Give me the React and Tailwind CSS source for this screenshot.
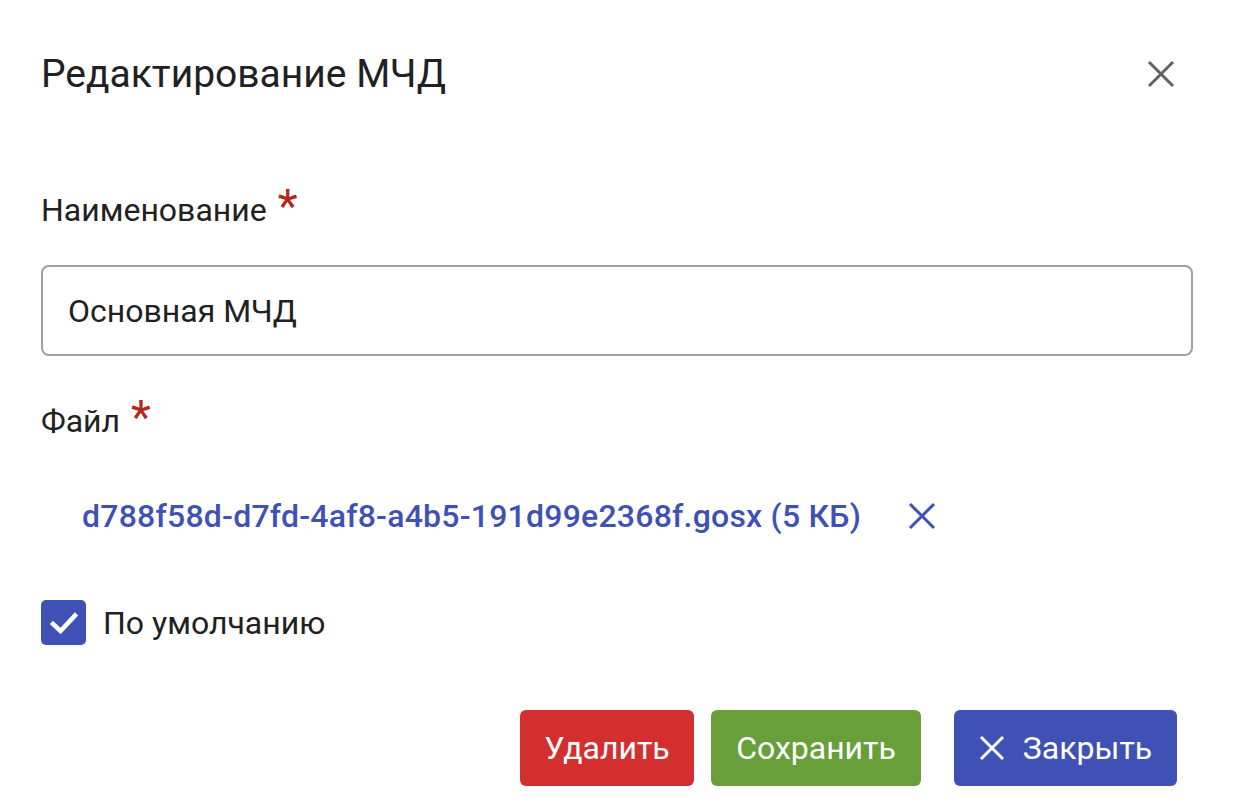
import React from "react";

export default function App() {
  return (
    <div className="w-[1234px] h-[812px] bg-white text-[#212121]" style={{ fontFamily: "Roboto, 'Noto Sans', sans-serif" }}>
      <div className="flex items-center justify-between pl-[41px] pr-[58px] pt-[46px]">
        <h1 className="text-[39px] leading-[56px] font-normal">Редактирование МЧД</h1>
        <button className="w-[30px] h-[30px] flex items-center justify-center text-[#616161]">
          <svg width="28" height="28" viewBox="0 0 28 28" fill="none" stroke="currentColor" strokeWidth="3">
            <path d="M2 2L26 26M26 2L2 26" />
          </svg>
        </button>
      </div>

      <div className="px-[41px] pt-[88px]">
        <label className="flex items-start text-[32px] leading-[40px]">
          Наименование
          <span className="text-[#b3261e] text-[46px] leading-[40px] ml-[11px] mt-[-4px]">*</span>
        </label>
        <div className="mt-[35px] h-[91px] w-[1152px] border-2 border-[#a0a0a0] rounded-[8px] flex items-center px-[25px] text-[32px]">
          Основная МЧД
        </div>

        <label className="flex items-start text-[32px] leading-[40px] mt-[45px]">
          Файл
          <span className="text-[#b3261e] text-[46px] leading-[40px] ml-[11px] mt-[-4px]">*</span>
        </label>

        <div className="flex items-center mt-[55px] pl-[41px] text-[#3f51b5]">
          <span className="text-[32px] leading-[40px] font-medium tracking-[0.22px]">d788f58d-d7fd-4af8-a4b5-191d99e2368f.gosx (5 КБ)</span>
          <svg className="ml-[47px]" width="28" height="28" viewBox="0 0 28 28" fill="none" stroke="currentColor" strokeWidth="3">
            <path d="M2 2L26 26M26 2L2 26" />
          </svg>
        </div>

        <div className="flex items-center mt-[64px]">
          <div className="w-[45px] h-[45px] rounded-[5px] bg-[#3f51b5] flex items-center justify-center">
            <svg width="32" height="32" viewBox="0 0 32 32" fill="none" stroke="white" strokeWidth="4.5" strokeLinecap="square">
              <path d="M5 17L12.5 24L27 8.5" />
            </svg>
          </div>
          <span className="ml-[17px] text-[32px] leading-[40px]">По умолчанию</span>
        </div>

        <div className="flex justify-end mt-[65px] pr-[16px] text-white text-[32px]">
          <button className="h-[76px] w-[174px] rounded-[6px] bg-[#d32f2f] flex items-center justify-center">Удалить</button>
          <button className="h-[76px] w-[210px] ml-[17px] rounded-[6px] bg-[#689f38] flex items-center justify-center">Сохранить</button>
          <button className="h-[76px] w-[223px] ml-[33px] rounded-[6px] bg-[#3f51b5] flex items-center justify-center">
            <svg width="26" height="26" viewBox="0 0 26 26" fill="none" stroke="white" strokeWidth="3">
              <path d="M2 2L24 24M24 2L2 24" />
            </svg>
            <span className="ml-[18px]">Закрыть</span>
          </button>
        </div>
      </div>
    </div>
  );
}
